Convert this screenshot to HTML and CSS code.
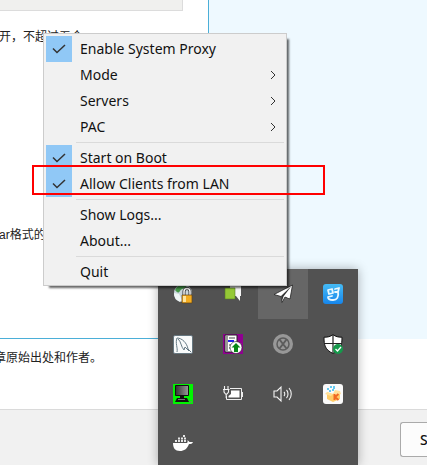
FILE: index.html
```html
<!DOCTYPE html>
<html lang="zh-CN">
<head>
<meta charset="utf-8">
<meta name="viewport" content="width=device-width, initial-scale=1">
<title>Tray menu</title>
<link rel="stylesheet" href="styles.css">
</head>
<body>
<main class="page">
  <div class="editor">
    <section class="form">
      <div class="field"></div>
      <p class="hint">开，不超过五个</p>
      <p class="hint hint-low">ar格式的</p>
    </section>
    <aside class="side"></aside>
  </div>
  <p class="notice">章原始出处和作者。</p>
  <footer class="footer"><button class="submit" type="button">S</button></footer>
</main>

<div class="tray">
  <button class="cell" type="button" aria-label="Network lock">
    <svg width="20" height="20" viewBox="0 0 20 20"><circle cx="10" cy="9" r="9" fill="#c9d6dc"/><path d="M2 6a9 9 0 0 1 12-5c-1 4-5 3-7 6s-3 1-5-1z" fill="#459848"/><path d="M1 9l5 1 3 6-2 2a9 9 0 0 1-6-9z" fill="#eef4f5"/><path d="M11 11V7.500a3 3 0 0 1 6 0V11" fill="none" stroke="#333" stroke-width="3"/><path d="M11 11V7.500a3 3 0 0 1 6 0V11" fill="none" stroke="#f5f5f5" stroke-width="1.500"/><path d="M9 11h10v8H9z" fill="#f4ad20" stroke="#624414" stroke-width=".7"/><path d="M10 12h3v6h-3z" fill="#ffe49b"/></svg>
  </button>
  <button class="cell" type="button" aria-label="Messages">
    <svg width="20" height="20" viewBox="0 0 20 20"><path d="M7 1h11v11h-1v5l-4-5H7z" fill="#f5f5f5"/><path d="M2 4h10v11H2z" fill="#95c936" stroke="#597d26" stroke-width=".6"/></svg>
  </button>
  <button class="cell cell-active" type="button" aria-label="Proxy">
    <svg width="20" height="20" viewBox="0 0 20 20"><path d="M19.500 1L17 15l-5-2-3 5.500-1-6-7-2z" fill="#fff" stroke="#222" stroke-width=".8"/><path d="M18.500 2L8 12l1 5 1.500-4.500z" fill="#333"/><path d="M18 4l-6 8 4 2z" fill="#fff"/></svg>
  </button>
  <button class="cell" type="button" aria-label="Assistant">
    <svg width="20" height="20" viewBox="0 0 20 20"><defs><linearGradient id="sky" x2="0" y2="1"><stop stop-color="#45bbf5"/><stop offset="1" stop-color="#1686ec"/></linearGradient></defs><rect width="20" height="20" rx="3" fill="url(#sky)"/><g fill="none" stroke="#eaf8ff" stroke-width="1.800" stroke-linecap="round" stroke-linejoin="round"><path d="M5 6l4-1 1 4-4 1zM12 5l4-1-1 4M12 8h3c1 5-1 8-5 8-3 0-5-1-5-3l4-1"/></g></svg>
  </button>
  <button class="cell" type="button" aria-label="Database">
    <svg width="20" height="20" viewBox="0 0 20 20"><rect x=".5" y="1.500" width="19" height="18" rx="1.500" fill="#f8fafa" stroke="#667780"/><path d="M4 18C5 14 2 9 4 4c5 0 10 5 11 11l3 3M5 5c3 2 3 8 6 11l1-3 4 4" fill="none" stroke="#667a85"/></svg>
  </button>
  <button class="cell" type="button" aria-label="Upload">
    <svg width="20" height="20" viewBox="0 0 20 20"><path d="M0 0h20v20H0z" fill="#900091"/><path d="M2 1h12v17H2z" fill="#fff" stroke="#222"/><path d="M4 2v15" stroke="#333"/><path d="M6 4h6M6 11h3M6 14h3" stroke="#444" stroke-width="1.200"/><path d="M5 7h6" stroke="#2020ee" stroke-width="2"/><circle cx="13" cy="13.500" r="6" fill="#fff" stroke="#222" stroke-width=".6"/><path d="M13 9l4.500 4.500H15V18h-4v-4.500H8.500z" fill="#078817"/></svg>
  </button>
  <button class="cell" type="button" aria-label="Stopped">
    <svg width="20" height="20" viewBox="0 0 20 20"><circle cx="10" cy="10" r="10" fill="#989898"/><circle cx="10" cy="10" r="6" fill="none" stroke="#5c5c5c" stroke-width="1.500"/><path d="M6.500 5.500l7 9m0-9l-7 9" stroke="#5c5c5c" stroke-width="2"/></svg>
  </button>
  <button class="cell" type="button" aria-label="Security">
    <svg width="20" height="20" viewBox="0 0 20 20"><path d="M10 .7c3 2 5 2.500 9 2.500 0 8-1 12.500-9 16.300C2 15.700 1 11.200 1 3.200c4 0 6-.5 9-2.500z" fill="#fff" stroke="#111"/><path d="M10 1v18M1 9.500h18" stroke="#222" stroke-width="1.200"/><circle cx="15" cy="15" r="5" fill="#15994b"/><path d="M12.500 15l2 2 3.500-4" fill="none" stroke="#fff" stroke-width="1.300"/></svg>
  </button>
  <button class="cell" type="button" aria-label="Computer">
    <svg width="20" height="20" viewBox="0 0 20 20"><defs><linearGradient id="screen"><stop stop-color="#333"/><stop offset="1" stop-color="#999"/></linearGradient></defs><path d="M0 0h20v20H0z" fill="#00f500"/><path d="M2.500 1.500h13v10h-13z" fill="url(#screen)" stroke="#111"/><path d="M7 12h4v2H7zM4 14h10l2 4H2z" fill="#111"/><path d="M5 15.500h7M16 18h3" stroke="#777"/></svg>
  </button>
  <button class="cell" type="button" aria-label="Battery">
    <svg width="20" height="20" viewBox="0 0 20 20"><path d="M7 4.500h11.500v11H3.500V12" fill="none" stroke="#eee"/><path d="M19.500 8v5" stroke="#eee"/><path d="M8 6.500h8.500v7h-11V12L8 10z" fill="#fff"/><path d="M1.500 2v3M5 2v3M0 5.500h6.500M1 6v2l1.500 2h1.500l1.500-2V6M3.200 10v4" fill="none" stroke="#f4f4f4" stroke-width="1.100"/></svg>
  </button>
  <button class="cell" type="button" aria-label="Volume">
    <svg width="20" height="20" viewBox="0 0 20 20"><path d="M1 7h3l4-4v14l-4-4H1zM11 8c1 1 1 3 0 4M13.500 6c2 2 2 6 0 8M16 4c3 3.500 3 8.500 0 12" fill="none" stroke="#f4f4f4" stroke-width="1.100"/></svg>
  </button>
  <button class="cell" type="button" aria-label="Archive">
    <svg width="20" height="20" viewBox="0 0 20 20"><rect width="20" height="20" rx="3" fill="#fafafa"/><path d="M4 8l5 2 8-2v7l-7 3-6-3z" fill="#ffcc68"/><path d="M4 8L2 10l6 2 2-2M10 10l2 2 6-2-1-3-5-1" fill="#ffe09a"/><path d="M4 5h2M7 3h2M9 6h2M6 7h2M11 2v3" stroke="#35b9ed" stroke-width="1.500"/><path d="M11.500 10v6M15.500 10l-3.500 3 3.500 3" fill="none" stroke="#f06924" stroke-width="2"/></svg>
  </button>
  <button class="cell" type="button" aria-label="Docker">
    <svg width="20" height="20" viewBox="0 0 20 20"><path d="M0 9h14c1-1 .5-2 .5-3l2 2H20c-1 2-2 2-4 2-2 5-5 7-9 7-5 0-7-3-7-8z" fill="#fff"/><path d="M2 6h2v2H2zM5 6h2v2H5zM8 6h2v2H8zM11 6h2v2h-2zM5 3.500h2v2H5zM8 3.500h2v2H8zM10 1h2v2h-2zM11 3.500h2v2h-2z" fill="#e6e6e6"/></svg>
  </button>
</div>

<div class="menu" role="menu">
  <button class="item" type="button" role="menuitemcheckbox" aria-checked="true"><span class="mark marked"><svg width="14" height="10" viewBox="0 0 14 10"><path d="M1 4.500l4 4L13 1"/></svg></span><span class="label">Enable System Proxy</span></button>
  <button class="item" type="button" role="menuitem"><span class="mark"></span><span class="label">Mode</span><svg class="arrow" width="6" height="10" viewBox="0 0 6 10"><path d="M1 1l4 4-4 4"/></svg></button>
  <button class="item" type="button" role="menuitem"><span class="mark"></span><span class="label">Servers</span><svg class="arrow" width="6" height="10" viewBox="0 0 6 10"><path d="M1 1l4 4-4 4"/></svg></button>
  <button class="item" type="button" role="menuitem"><span class="mark"></span><span class="label">PAC</span><svg class="arrow" width="6" height="10" viewBox="0 0 6 10"><path d="M1 1l4 4-4 4"/></svg></button>
  <hr class="rule">
  <button class="item" type="button" role="menuitemcheckbox" aria-checked="true"><span class="mark marked"><svg width="14" height="10" viewBox="0 0 14 10"><path d="M1 4.500l4 4L13 1"/></svg></span><span class="label">Start on Boot</span></button>
  <button class="item" type="button" role="menuitemcheckbox" aria-checked="true"><span class="mark marked"><svg width="14" height="10" viewBox="0 0 14 10"><path d="M1 4.500l4 4L13 1"/></svg></span><span class="label">Allow Clients from LAN</span></button>
  <hr class="rule">
  <button class="item" type="button" role="menuitem"><span class="mark"></span><span class="label">Show Logs...</span></button>
  <button class="item" type="button" role="menuitem"><span class="mark"></span><span class="label">About...</span></button>
  <hr class="rule">
  <button class="item" type="button" role="menuitem"><span class="mark"></span><span class="label">Quit</span></button>
</div>
<div class="highlight"></div>
</body>
</html>
```
FILE: styles.css
```css
* { box-sizing: border-box; }

body {
  margin: 0;
  background: #fff;
  color: #222;
  font-family: "Noto Sans", "Open Sans", sans-serif;
}

button {
  margin: 0;
  padding: 0;
  border: 0;
  background: none;
  color: inherit;
  font: inherit;
}

/* Page behind the menus */
.page {
  display: flex;
  flex-direction: column;
  min-height: 100vh;
  overflow: hidden;
}

.editor {
  display: grid;
  grid-template-columns: 209px 1fr;
  min-height: 339px;
}

.form {
  border-right: 1px solid #4bafd8;
  border-bottom: 1px solid #4bafd8;
}

.side { background: #eef9ff; }

.field {
  height: 11px;
  margin-right: 25px;
  border: solid #dcdcdc;
  border-width: 0 1px 1px 0;
  background: #f0f0ee;
}

.hint,
.notice {
  font-family: "Liberation Sans", "Noto Sans CJK SC", sans-serif;
  font-size: 12px;
  line-height: 18px;
  white-space: nowrap;
}

.hint { margin: 17px 0 0 -1px; }

.hint-low { margin-top: 180px; }

.notice { margin: 10px 0 0 -6px; }

.footer {
  display: flex;
  flex: 1;
  align-items: flex-start;
  justify-content: flex-end;
  margin-top: 42px;
  padding-top: 12px;
  border-top: 1px solid #dadada;
  background: #f1f1f1;
}

.submit {
  width: 27px;
  height: 35px;
  padding-left: 19px;
  border: 1px solid #aaa;
  border-right: 0;
  border-radius: 3px 0 0 3px;
  background: #fcfcfc;
  color: #111;
  font-size: 14px;
  font-weight: 500;
  line-height: 20px;
  text-align: left;
}

/* Notification overflow panel */
.tray {
  position: absolute;
  top: 269px;
  left: 158px;
  bottom: 0;
  display: grid;
  grid-template-columns: repeat(4, 50px);
  grid-auto-rows: 50px;
  align-content: start;
  overflow: clip;
  background: #525252;
  box-shadow: 0 0 10px rgba(0, 0, 0, 0.3);
}

.cell {
  display: grid;
  place-items: center;
}

.cell-active { background: #666; }

/* Context menu */
.menu {
  position: absolute;
  top: 33px;
  left: 43px;
  width: 244px;
  padding: 2px 2px 0;
  border: 1px solid #ccc;
  background: #f1f1f1;
  box-shadow: 4px 4px 2px -2px rgba(0, 0, 0, 0.6);
  color: #111;
  font-size: 14px;
  line-height: 20px;
}

.item {
  display: flex;
  align-items: center;
  width: 100%;
  height: 26px;
  padding-right: 8px;
  text-align: left;
}

.mark {
  display: grid;
  place-items: center;
  width: 26px;
  height: 26px;
  margin-right: 8px;
}

.marked { background: #90c8f6; }

.label { flex: 1; }

.item path {
  fill: none;
  stroke: #333;
  stroke-width: 1.5;
}

.item .arrow path { stroke-width: 1; }

.rule {
  height: 1px;
  margin: 2px 0 2px 30px;
  border: 0;
  background: #dadada;
}

.highlight {
  position: absolute;
  top: 165px;
  left: 32px;
  width: 293px;
  height: 30px;
  border: 2px solid #f00;
}
```
